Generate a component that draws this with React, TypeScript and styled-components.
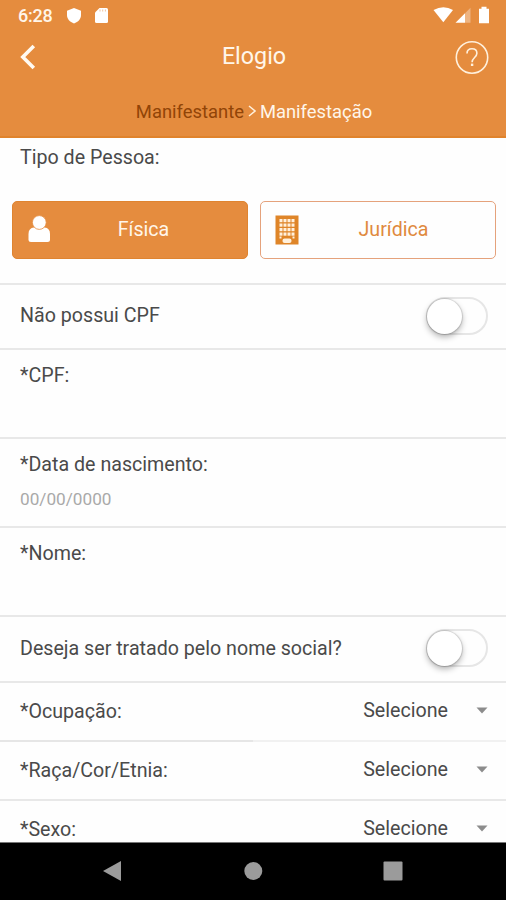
import React from "react";
import styled, { createGlobalStyle } from "styled-components";

const orange = "#e58c3e";

const GlobalStyle = createGlobalStyle`
  * { box-sizing: border-box; }
  html, body { margin: 0; padding: 0; background: #fefefe; }
  body { font-family: Roboto, "Liberation Sans", sans-serif; color: #4a4a4a; overflow: hidden; }
  button { font: inherit; border: 0; padding: 0; background: none; color: inherit; }
`;

const Screen = styled.div`
  width: 506px;
  height: 900px;
  display: flex;
  flex-direction: column;
  overflow: hidden;
  background: #fefefe;
`;

const Header = styled.header`
  height: 138px;
  flex: none;
  background: ${orange};
  border-bottom: 2px solid #e0832c;
  color: #fff6ea;
`;

const StatusBar = styled.div`
  height: 32px;
  padding: 0 15px 0 18px;
  display: flex;
  justify-content: space-between;
  align-items: center;
`;

const Clock = styled.span`
  font-size: 18px;
  font-weight: 500;
  letter-spacing: -0.2px;
  width: 48px;
  padding-bottom: 1px;
`;

const StatusGroup = styled.div`
  display: flex;
  align-items: center;
  height: 32px;
`;

const TitleBar = styled.div`
  height: 50px;
  padding: 0 17px 0 18px;
  display: grid;
  grid-template-columns: 34px 1fr 35px;
  align-items: center;
`;

const Title = styled.h1`
  margin: 0;
  text-align: center;
  font-size: 23.3px;
  font-weight: 400;
  line-height: 28px;
  padding: 0 0 2px 2px;
`;

const IconButton = styled.button`
  display: flex;
  align-items: center;
`;

const Breadcrumb = styled.nav`
  height: 58px;
  display: flex;
  align-items: center;
  justify-content: center;
  gap: 4px;
  font-size: 18.4px;
  padding: 0 0 0 2px;
`;

const Crumb = styled.span<{ $current?: boolean }>`
  color: ${(p) => (p.$current ? "#fff6ea" : "#914407")};
  font-weight: 400;
`;

const Form = styled.main`
  height: 704px;
  flex: none;
  overflow: hidden;
  font-size: 19.65px;
  line-height: 24px;
`;

const Row = styled.div<{ $h: number; $halfTone?: boolean }>`
  height: ${(p) => p.$h}px;
  padding: 0 18px 0 20px;
  display: flex;
  align-items: center;
  justify-content: space-between;
  border-bottom: 2px solid #e8e8e8;
  ${(p) =>
    p.$halfTone &&
    "border-image: linear-gradient(to right, #e6e6e6 50%, #f1f1f1 50%) 2;"}
`;

const Field = styled.div<{ $h: number }>`
  height: ${(p) => p.$h}px;
  padding: 14px 20px 0;
  display: flex;
  flex-direction: column;
  gap: 10px;
  border-bottom: 2px solid #e8e8e8;
`;

const TypeSection = styled.section`
  height: 147px;
  padding: 8px 10px 0 12px;
  border-bottom: 2px solid #e8e8e8;
`;

const TypeLabel = styled.div`
  padding-left: 8px;
  height: 55px;
`;

const TypeOptions = styled.div`
  display: grid;
  grid-template-columns: 236px 236px;
  gap: 12px;
`;

const TypeButton = styled.button<{ $active?: boolean }>`
  height: 58px;
  display: grid;
  grid-template-columns: 26px 1fr;
  align-items: center;
  padding: 0 0 0 14px;
  border-radius: 5px;
  border: 1.5px solid ${(p) => (p.$active ? "#df8430" : "#e5a27c")};
  background: ${(p) => (p.$active ? orange : "#fefefe")};
  color: ${(p) => (p.$active ? "#fff6ea" : "#e08a3e")};
`;

const TypeName = styled.span<{ $inset: number }>`
  text-align: center;
  padding-right: ${(p) => p.$inset}px;
`;

const Placeholder = styled.span`
  font-size: 17.2px;
  color: #a9a9a9;
`;

const RowLabel = styled.span`
  padding-bottom: 1px;
`;

const Track = styled.div`
  width: 62px;
  height: 38px;
  margin-bottom: 2px;
  border: 2px solid #e6e6e6;
  border-radius: 19px;
  background: #fefefe;
`;

const Knob = styled.div`
  width: 35px;
  height: 35px;
  margin: 0 0 0 -1px;
  border-radius: 50%;
  background: #fff;
  box-shadow: 0 0 1px 1px rgba(0, 0, 0, 0.13), 0 3px 6px rgba(0, 0, 0, 0.3);
`;

const Picker = styled.div`
  display: flex;
  align-items: center;
  gap: 28px;
  padding-bottom: 2px;
`;

const NavBar = styled.footer`
  height: 58px;
  flex: none;
  background: #000;
  border-top: 1px solid #777;
  padding: 0 103px 2px 102px;
  display: flex;
  align-items: center;
  justify-content: space-between;
`;

const Toggle = () => (
  <Track role="switch" aria-checked="false">
    <Knob />
  </Track>
);

const Select = () => (
  <Picker>
    <span>Selecione</span>
    <svg width="12" height="7" viewBox="0 0 12 7">
      <path d="M0.500 0.500h11L6 6.500z" fill="#8c8c8c" />
    </svg>
  </Picker>
);

const StatusIcons = () => (
  <svg width="60" height="32" viewBox="431 0 60 32" fill="#fff">
    <path d="M433.500 10Q443.500 4.500 453 10L443.300 22.300z" />
    <path d="M455.500 22.700L465 13.200v9.500z" />
    <path d="M465 13.200l5.500-5.500v15h-5.500z" opacity=".35" />
    <path d="M479 8.700h2.500V6.700h5v2h2.500v14.500h-10z" />
  </svg>
);

const PersonIcon = () => (
  <svg width="24" height="30" viewBox="0 0 24 30" fill="#fff">
    <path d="M7 12.500Q1.500 13 1.500 19v5.500Q1.500 27 4 27h16.500q2.500 0 2.500-2.500V19q0-6-5.500-6.500z" />
    <circle cx="12.300" cy="7.500" r="6.900" stroke={orange} strokeWidth="0.800" />
  </svg>
);

const BuildingIcon = () => (
  <svg width="24" height="30" viewBox="0 0 24 30">
    <path d="M0.500 0.500h23v29h-23z" fill="#df8528" />
    <g fill="#fff0dc">
      {[4, 8.5, 13, 17.5].map((y) =>
        [4.5, 8.5, 12.5, 16.5].map((x) => <rect key={`${x}-${y}`} x={x} y={y} width="3" height="3.200" />)
      )}
      <path d="M4.500 21.500h2v2h-2zM17.500 21.500h2v2h-2z" />
      <rect x="7.500" y="23.500" width="9" height="4.500" rx="2" />
    </g>
  </svg>
);

export default function App() {
  return (
    <>
      <GlobalStyle />
      <Screen>
        <Header>
          <StatusBar>
            <StatusGroup>
              <Clock>6:28</Clock>
              <svg width="44" height="32" viewBox="66 0 44 32" fill="#fff">
                <path d="M74 8l7 2.800V15c0 4-2.800 7-7 8.500-4.200-1.500-7-4.500-7-8.500v-4.200z" />
                <path d="M99.500 8H106.500a1.500 1.500 0 0 1 1.500 1.500v12a1.500 1.500 0 0 1-1.500 1.500h-10a1.500 1.500 0 0 1-1.500-1.500v-9z" />
                <path d="M100 9.500v2M102.700 9.500v2M105.400 9.500v2" stroke={orange} strokeWidth="1" opacity=".5" />
              </svg>
            </StatusGroup>
            <StatusIcons />
          </StatusBar>
          <TitleBar>
            <IconButton aria-label="Voltar">
              <svg width="20" height="28" viewBox="0 0 20 28" fill="none">
                <path d="M15.800 3L4.800 14l11 11" stroke="#fffaf2" strokeWidth="3.600" />
              </svg>
            </IconButton>
            <Title>Elogio</Title>
            <IconButton aria-label="Ajuda">
              <svg width="35" height="35" viewBox="0 0 35 35" fill="none" stroke="#fff0dc" strokeWidth="1.600">
                <circle cx="18" cy="17.500" r="15.700" />
                <path d="M13 13.500c0-3 2-4.700 5-4.700s4.900 1.700 4.900 4.400c0 4.300-4.800 4.300-4.800 9" />
                <path d="M18.100 23.600v2.400" strokeWidth="2.400" />
              </svg>
            </IconButton>
          </TitleBar>
          <Breadcrumb>
            <Crumb>Manifestante</Crumb>
            <svg width="8" height="12" viewBox="0 0 8 12" fill="none">
              <path d="M1 1l6 5-6 5" stroke="#fff0dc" strokeWidth="1.500" />
            </svg>
            <Crumb $current>Manifestação</Crumb>
          </Breadcrumb>
        </Header>
        <Form>
          <TypeSection>
            <TypeLabel>Tipo de Pessoa:</TypeLabel>
            <TypeOptions>
              <TypeButton $active>
                <PersonIcon />
                <TypeName $inset={13}>Física</TypeName>
              </TypeButton>
              <TypeButton>
                <BuildingIcon />
                <TypeName $inset={9}>Jurídica</TypeName>
              </TypeButton>
            </TypeOptions>
          </TypeSection>
          <Row $h={65}>
            <RowLabel>Não possui CPF</RowLabel>
            <Toggle />
          </Row>
          <Field $h={89}>
            <span>*CPF:</span>
          </Field>
          <Field $h={89}>
            <span>*Data de nascimento:</span>
            <Placeholder>00/00/0000</Placeholder>
          </Field>
          <Field $h={89}>
            <span>*Nome:</span>
          </Field>
          <Row $h={66}>
            <RowLabel>Deseja ser tratado pelo nome social?</RowLabel>
            <Toggle />
          </Row>
          <Row $h={59} $halfTone>
            <span>*Ocupação:</span>
            <Select />
          </Row>
          <Row $h={59}>
            <span>*Raça/Cor/Etnia:</span>
            <Select />
          </Row>
          <Row $h={59}>
            <span>*Sexo:</span>
            <Select />
          </Row>
        </Form>
        <NavBar>
          <svg width="20" height="22" viewBox="0 0 20 22">
            <path d="M1 11L19 1v20z" fill="#9b9b9b" />
          </svg>
          <svg width="20" height="20" viewBox="0 0 20 20">
            <circle cx="10.300" cy="10" r="9" fill="#9b9b9b" />
          </svg>
          <svg width="20" height="20" viewBox="0 0 20 20">
            <rect x="0.500" y="0.500" width="19" height="19" rx="1" fill="#9b9b9b" />
          </svg>
        </NavBar>
      </Screen>
    </>
  );
}
